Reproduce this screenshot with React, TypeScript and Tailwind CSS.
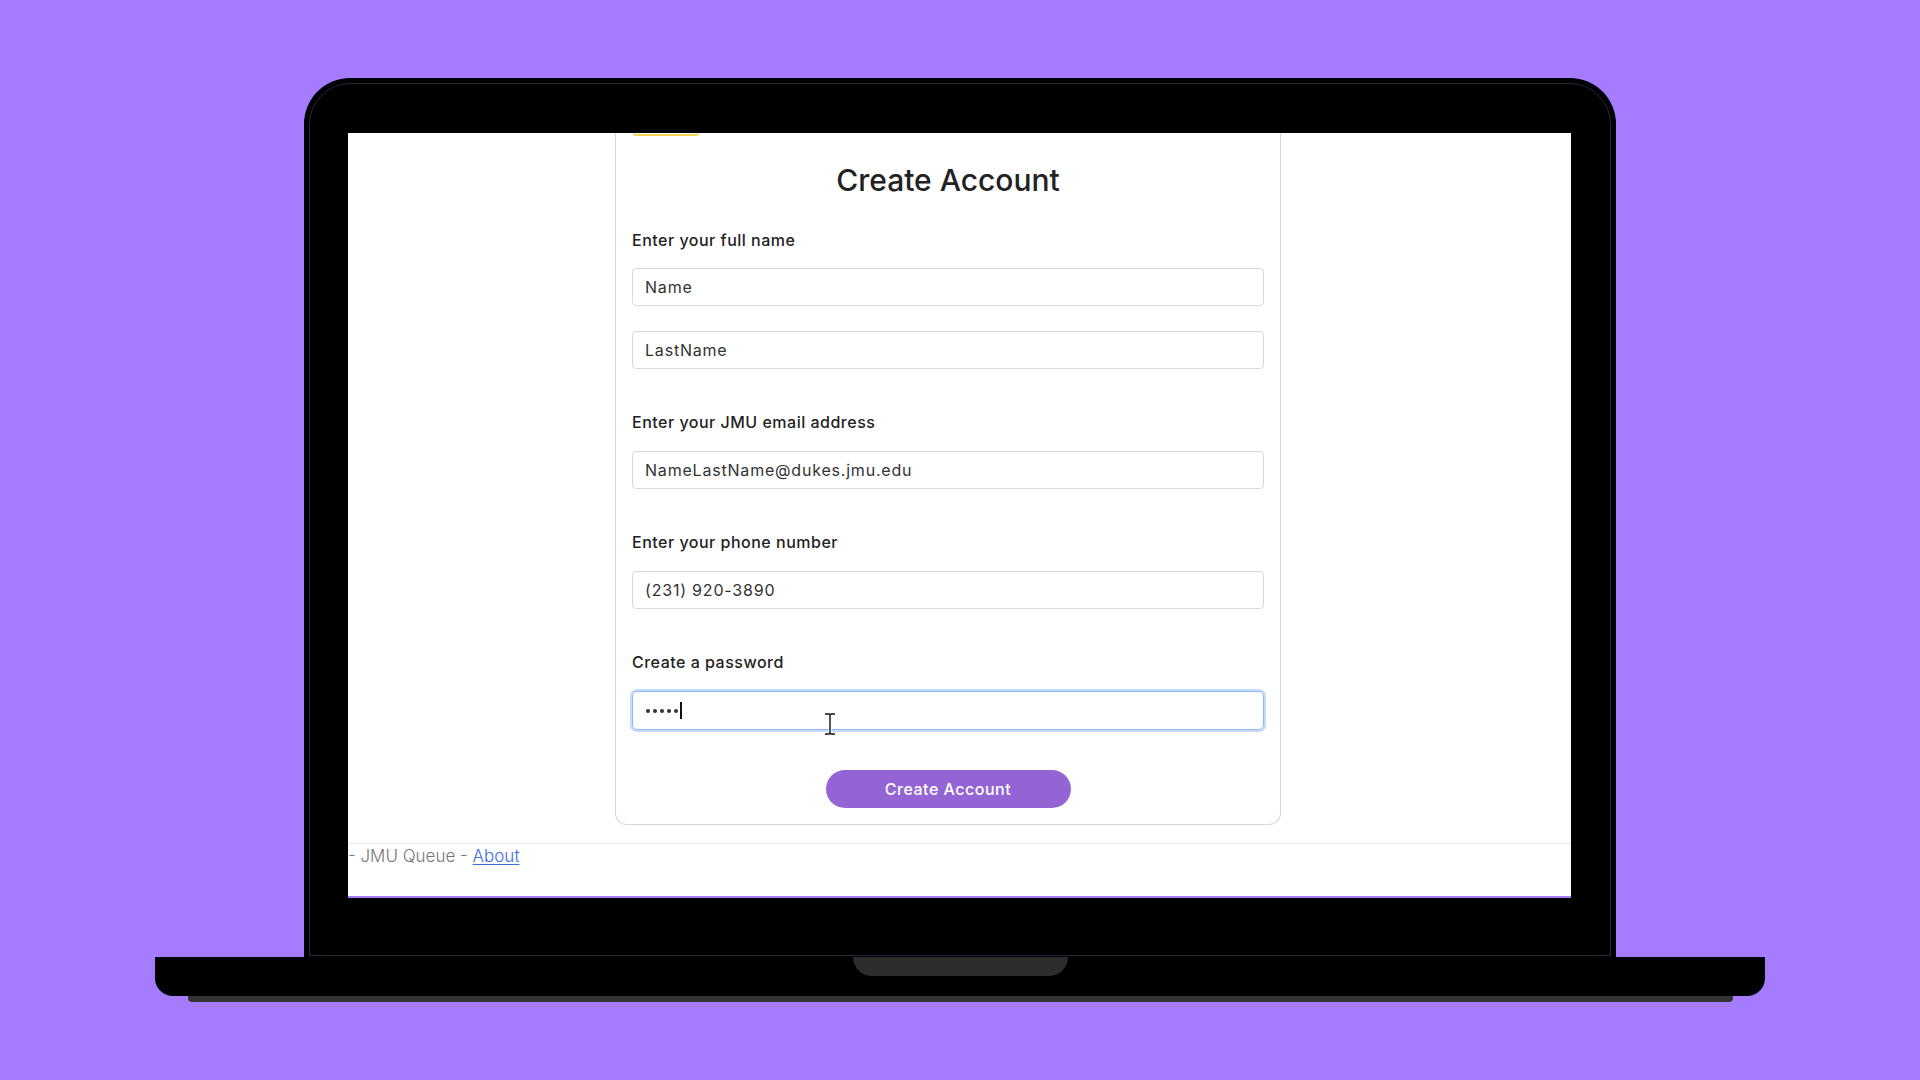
import React from 'react'

const font = { fontFamily: 'Inter, "Noto Sans", sans-serif' }

const Field = ({ value, className = '' }: { value: string; className?: string }) => (
  <input
    readOnly
    placeholder={value}
    className={`w-full h-[38px] rounded-[4px] border border-[#dadada] bg-white px-[12px] text-[16px] tracking-[0.8px] text-[#333] placeholder:text-[#333] outline-none ${className}`}
  />
)

const Label = ({ children, className = '' }: { children: React.ReactNode; className?: string }) => (
  <p className={`text-[16px] leading-[24px] tracking-[0.5px] font-medium text-[#222] ${className}`}>{children}</p>
)

const SignupCard = () => (
  <div className="ml-[267px] w-[666px] border-x border-b border-[#d6d6d6] rounded-b-[12px] px-[16px] pb-[16px]">
    <div className="ml-[1px] w-[66px] h-[3px] border-b-2 border-x border-[#efd550] rounded-b-[4px]" />
    <h1 className="mt-[24px] text-center text-[30px] leading-[40px] font-medium text-[#222]">Create Account</h1>

    <Label className="mt-[28px]">Enter your full name</Label>
    <Field value="Name" className="mt-[16px]" />
    <Field value="LastName" className="mt-[25px]" />

    <Label className="mt-[41px]">Enter your JMU email address</Label>
    <Field value="NameLastName@dukes.jmu.edu" className="mt-[17px]" />

    <Label className="mt-[41px]">Enter your phone number</Label>
    <Field value="(231) 920-3890" className="mt-[17px]" />

    <Label className="mt-[41px]">Create a password</Label>
    <div className="mt-[17px] h-[39px] rounded-[5px] border border-[#90b8f2] ring-2 ring-[#c6dbfb] flex items-center px-[13px]">
      <div className="flex gap-[3px]">
        {[0, 1, 2, 3, 4].map((i) => (
          <span key={i} className="w-[4px] h-[4px] rounded-full bg-[#333]" />
        ))}
      </div>
      <span className="ml-[2px] w-[2px] h-[17px] bg-[#111]" />
    </div>

    <div className="mt-[40px] flex justify-center">
      <button className="w-[245px] h-[38px] rounded-full bg-[#9464d5] text-white text-[16px] tracking-[0.5px] font-medium">
        Create Account
      </button>
    </div>
  </div>
)

const IBeam = () => (
  <svg className="absolute left-[476px] top-[580px]" width="12" height="22" viewBox="0 0 12 22">
    <path d="M1 1h4l1 1 1-1h4M6 2v18M1 21h4l1-1 1 1h4" fill="none" stroke="#fff" strokeWidth="3" />
    <path d="M1 1h4l1 1 1-1h4M6 2v18M1 21h4l1-1 1 1h4" fill="none" stroke="#111" strokeWidth="1.4" />
  </svg>
)

export default function App() {
  return (
    <div style={font} className="w-full h-[1080px] bg-[#a67cff] overflow-hidden flex flex-col items-center pt-[78px]">
      <div className="relative w-[1312px] h-[879px] bg-black rounded-t-[46px] pt-[55px] pl-[44px]">
        <div className="absolute left-[5px] right-[5px] top-[5px] bottom-[1px] border border-[#2a2440] rounded-t-[41px] pointer-events-none" />
        <div className="relative w-[1223px] h-[765px] bg-white overflow-hidden flex flex-col border-b-2 border-[#a67cff]">
          <SignupCard />
          <footer className="mt-[18px] border-t border-[#e8e8e8] text-[17px] leading-[24px] font-light text-[#777]">
            <span>- JMU Queue - </span>
            <a className="text-[#4169e1] underline underline-offset-2">About</a>
          </footer>
          <IBeam />
        </div>
      </div>
      <div className="w-[1610px] h-[39px] bg-black rounded-b-[18px] flex justify-center">
        <div className="w-[215px] h-[19px] bg-[#2e2d2c] rounded-b-[20px]" />
      </div>
      <div className="w-[1545px] h-[6px] bg-[#353331] rounded-b-[4px]" />
    </div>
  )
}
